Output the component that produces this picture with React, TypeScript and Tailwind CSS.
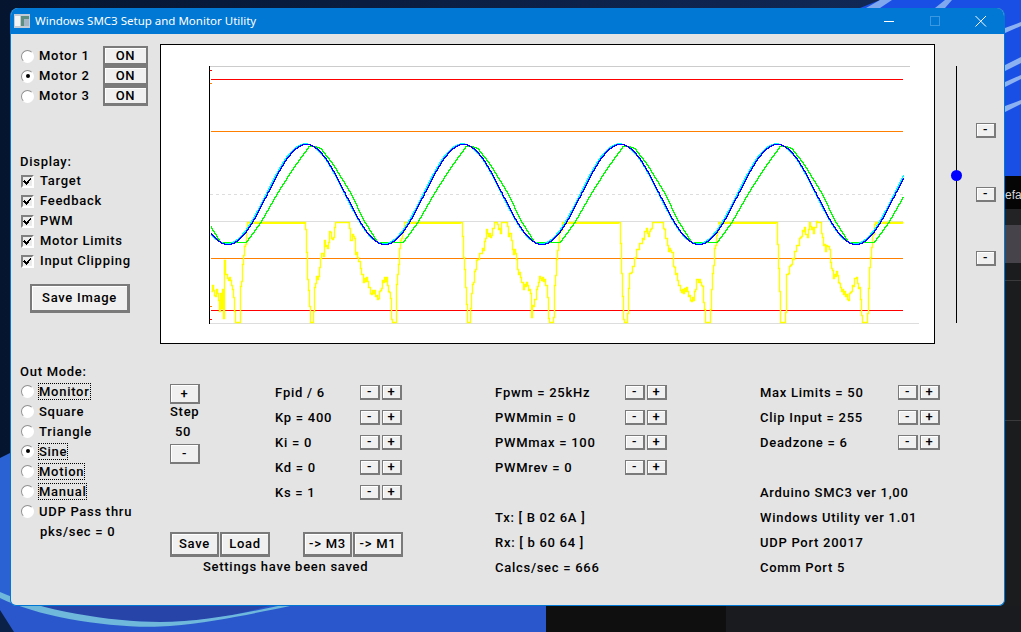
import React from "react";

const lerpPts = (pts: number[][], x: number) => {
  if (x <= pts[0][0]) return pts[0][1];
  for (let i = 1; i < pts.length; i++) {
    if (x <= pts[i][0]) {
      const [x0, y0] = pts[i - 1];
      const [x1, y1] = pts[i];
      return x1 === x0 ? y1 : y0 + ((y1 - y0) * (x - x0)) / (x1 - x0);
    }
  }
  return pts[pts.length - 1][1];
};

const stepped = (fn: (x: number) => number, x0: number, x1: number) => {
  let d = `M${x0 + 0.5} ${Math.round(fn(x0)) + 0.5}`;
  for (let x = x0 + 1; x <= x1; x++) d += `H${x + 0.5}V${Math.round(fn(x)) + 0.5}`;
  return d;
};

const blue = (x: number) => 194 - 50 * Math.cos((2 * Math.PI * (x - 305.5)) / 157);

const greenShape = [
  [-78.5, 241.7], [-60, 241.7], [-45.5, 222], [-29, 193], [-12.5, 167], [2.8, 146], [9, 146], [14.5, 148],
  [27.5, 165], [44.5, 193], [57.5, 220], [71, 241.7], [78.5, 241.7],
];
const green = (x: number) => {
  let r = ((x - 305.5 + 78.5) % 157 + 157) % 157 - 78.5;
  return lerpPts(greenShape, r);
};

const z4 = [[32,690],[38,672],[42,712],[50,692],[56,725],[58,790],[60,700],[64,750],[66,690],[70,790],[72,606],[76,650],[84,655],[92,660],[96,690],[100,705],[103,788],[117,788],[118,690],[124,650],[128,580],[135,550],[140,490],[146,486],[314,486],[316,520],[320,650],[326,700],[328,788],[338,788],[340,700],[346,660],[352,655],[358,620],[362,570],[368,590],[372,545],[380,570],[388,510],[396,540],[405,490],[415,490],[425,488],[437,490],[445,490],[450,540],[460,515],[465,580],[475,600],[480,625],[490,660],[500,660],[510,700],[520,690],[530,720],[540,690],[548,655],[558,660],[570,715],[574,788],[586,788],[588,680],[596,580],[600,540],[612,490],[620,486],[784,486],[786,530],[790,600],[796,695],[800,788],[808,788],[812,700],[820,650],[830,600],[840,580],[850,560],[858,515],[870,530],[880,490],[890,490],[900,520]];
const z11 = [[8,560],[16,520],[24,525],[32,495],[45,488],[60,488],[70,488],[80,490],[85,530],[92,515],[95,570],[105,575],[110,625],[120,650],[130,680],[140,672],[150,700],[154,788],[155,740],[165,715],[175,655],[190,655],[200,690],[205,788],[218,788],[222,680],[230,580],[235,530],[247,490],[275,486],[418,486],[420,550],[425,690],[430,788],[440,788],[445,650],[455,625],[470,570],[485,540],[495,510],[505,525],[515,490],[530,490],[548,488],[555,530],[565,570],[575,570],[580,620],[590,655],[600,690],[620,690],[630,720],[640,710],[650,655],[665,670],[675,788],[688,788],[695,640]];
const z12 = [[15,788],[28,788],[32,690],[42,570],[55,490],[60,486],[228,486],[235,640],[240,788],[254,788],[258,650],[268,620],[285,570],[295,545],[310,500],[320,540],[325,490],[340,510],[350,488],[360,490],[365,530],[375,570],[385,550],[390,605],[400,650],[410,640],[418,680],[430,695],[442,720],[455,680],[465,650],[478,690],[485,788],[500,788],[505,650],[515,530],[525,486],[608,486]];
const yellowPts = [
  ...z4.map(([x, y]) => [200 + x / 3, 60 + y / 3]),
  ...z11.map(([x, y]) => [480 + x / 3, 60 + y / 3]),
  ...z12.map(([x, y]) => [700 + x / 3, 60 + y / 3]),
].filter((p, i, a) => i === 0 || p[0] > a[i - 1][0]);
const yellow = (x: number) => lerpPts(yellowPts, x);
const jitter = (x: number) => {
  const y = yellow(x);
  if (y > 221 && y < 224) return 222;
  if (y > 320) return 322;
  return y + [0, 2, -1, 3, -2, 1, -3, 0, 2, -2][x % 10];
};

const Chart = () => (
  <div className="h-[300px] w-[775px] shrink-0 border border-black bg-white">
    <svg width="773" height="298" viewBox="161 45 773 298" className="block" shapeRendering="crispEdges" fill="none">
      <path d="M210 66.5H910" stroke="#cccccc" />
      <path d="M210 323.5H919" stroke="#dddddd" />
      <path d="M210 221.5H903" stroke="#dddddd" />
      <path d="M210 194.5H903" stroke="#dddddd" strokeDasharray="3 3" />
      <path d="M211 79.5H903" stroke="#ff0000" />
      <path d="M211 131.5H903" stroke="#ff8000" />
      <path d="M211 258.5H903" stroke="#ff8000" />
      <path d="M211 310.5H903" stroke="#ff0000" />
      <path d="M209.5 66V324" stroke="#000000" />
      <path d="M210 70.5h2M210 319.5h2" stroke="#ff0000" />
      <path d="M210 83.5h2M210 306.5h2" stroke="#ff8000" />
      <path d={stepped(jitter, 211, 903)} stroke="#ffff00" strokeWidth="1.4" shapeRendering="auto" />
      <path d="M249 222.5H305M407 222.5H461M562 222.5H619M718 222.5H776M875 222.5H903" stroke="#ffff00" strokeWidth="2" />
      <path d={stepped(green, 210, 903)} stroke="#00ff00" />
      <path d={stepped((x) => blue(x + 1) - 0.6, 210, 903)} stroke="#00ffff" />
      <path d={stepped(blue, 210, 903)} stroke="#0000ff" strokeWidth="1.5" />
    </svg>
  </div>
);

const Btn = ({ children, className }: { children?: React.ReactNode; className: string }) => (
  <div className={`flex shrink-0 items-center justify-center border border-[#7a7a7a] border-r-2 border-b-2 bg-[#f0f0f0] text-black shadow-[inset_1px_1px_0_#ffffff] ${className}`}>
    {children}
  </div>
);

const Radio = ({ checked }: { checked?: boolean }) => (
  <div className="ml-[1px] flex h-[13px] w-[13px] shrink-0 items-center justify-center rounded-full border border-[#8f8f8f] border-r-white border-b-white bg-white">
    {checked && <div className="h-[4px] w-[4px] rounded-full bg-black" />}
  </div>
);

const Check = () => (
  <div className="ml-[1px] flex h-[13px] w-[13px] shrink-0 items-center justify-center border-2 border-[#808080] border-r-white border-b-white bg-[#ececec]">
    <svg width="9" height="9" viewBox="0 0 9 9" fill="none" stroke="#000" strokeWidth="1.8" shapeRendering="crispEdges">
      <path d="M1 4l2.5 2.5L8 1.5" />
    </svg>
  </div>
);

const MotorRow = ({ label, checked }: { label: string; checked?: boolean }) => (
  <div className="flex h-5 items-center">
    <Radio checked={checked} />
    <span className="ml-[5px] w-[64px]">{label}</span>
    <Btn className="h-5 w-[45px] border-2 border-b-[3px]">ON</Btn>
  </div>
);

const CheckRow = ({ label }: { label: string }) => (
  <div className="flex h-5 items-center">
    <Check />
    <span className="ml-[6px]">{label}</span>
  </div>
);

const ModeRow = ({ label, checked, focus }: { label: string; checked?: boolean; focus?: boolean }) => (
  <div className="flex h-5 items-center">
    <Radio checked={checked} />
    <span className={`ml-[4px] border border-dotted px-0 leading-[15px] ${focus ? "border-black" : "border-transparent"}`}>{label}</span>
  </div>
);

const ParamRow = ({ label, w }: { label: string; w: string }) => (
  <div className="flex h-[25px] items-center">
    <span className={`shrink-0 ${w}`}>{label}</span>
    <Btn className="h-[15px] w-5">-</Btn>
    <Btn className="ml-[2px] h-[15px] w-5">+</Btn>
  </div>
);

const TextRow = ({ label }: { label: string }) => <div className="flex h-[25px] items-center">{label}</div>;

const Wallpaper = () => (
  <svg className="absolute inset-0" width="1021" height="632" viewBox="0 0 1021 632">
    <defs>
      <linearGradient id="navy" x1="0" x2="1" y1="0" y2="0">
        <stop offset="0" stopColor="#051530" />
        <stop offset="1" stopColor="#132b5c" />
      </linearGradient>
    </defs>
    <rect width="1021" height="632" fill="url(#navy)" />
    <path d="M0 458L12 452V632H0Z" fill="#2a62d4" />
    <rect x="0" y="600" width="546" height="32" fill="#2a58cc" />
    <path d="M10 600H290C250 612 210 622 160 622C110 622 50 612 10 600Z" fill="#2745a8" />
    <path d="M0 598C40 618 120 630 170 626C215 622 260 612 290 606H278C240 614 200 622 160 622C110 622 40 610 0 592Z" fill="#6fb8dc" />
    <path d="M0 610L14 632H0Z" fill="#0b2148" />
    <path d="M860 8L880 0H1021V176H1000V8Z" fill="#1a4fe6" />
    <path d="M866 8L880 0H892L880 8ZM935 8L945 0H952L945 8Z" fill="#7fa8ee" />
    <path d="M1005 28L1021 22V26L1005 33ZM1005 65L1021 57V63L1005 71ZM1005 82L1021 75V79L1005 87ZM1005 106L1021 100V104L1005 112Z" fill="#8db2f2" />
    <rect x="546" y="606" width="180" height="26" fill="#0f0f10" />
    <rect x="726" y="606" width="295" height="26" fill="#1a1b1e" />
    <rect x="1000" y="176" width="21" height="33" fill="#050505" />
    <rect x="1000" y="209" width="21" height="16" fill="#232325" />
    <rect x="1000" y="225" width="21" height="38" fill="#46444a" />
    <rect x="1000" y="263" width="21" height="343" fill="#1b1c1e" />
    <rect x="1000" y="280" width="21" height="1" fill="#3a3a3c" />
    <rect x="1000" y="420" width="21" height="1" fill="#3a3a3c" />
  </svg>
);

const AppIcon = () => (
  <svg width="16" height="14" viewBox="0 0 16 14" shapeRendering="crispEdges">
    <rect width="16" height="14" fill="#c3ccd6" />
    <rect x="1" y="2" width="5" height="10" fill="#f2f4f6" />
    <rect x="7" y="2" width="8" height="10" fill="#5c8f80" />
    <rect x="10" y="5" width="5" height="7" fill="#a3b5c5" />
  </svg>
);

export default function App() {
  return (
    <div className="relative h-[632px] w-[1021px] overflow-hidden font-['Roboto',Arial,sans-serif] text-[13px] font-medium tracking-[0.72px] text-black">
      <Wallpaper />
      <span className="absolute left-[1005px] top-[186px] font-['Liberation_Sans',sans-serif] text-[12px] font-normal tracking-normal text-[#d8d8d8]">efa</span>
      <div className="absolute left-[10px] top-[8px] flex h-[598px] w-[995px] flex-col overflow-hidden rounded-t-lg rounded-b-[6px] border-x border-b border-[#0078d4] bg-[#e4e4e4]">
        <div className="-mx-px flex h-[26px] shrink-0 items-center bg-[#0078d4] text-white">
          <div className="ml-[4px] flex w-[21px] justify-start"><AppIcon /></div>
          <span className="font-['Noto_Sans',sans-serif] text-[11.5px] font-normal tracking-normal">Windows SMC3 Setup and Monitor Utility</span>
          <div className="ml-auto flex items-center">
            <svg width="130" height="26" viewBox="0 0 130 26" fill="none">
              <path d="M9 13.5H19" stroke="#fff" />
              <rect x="55.5" y="8.5" width="9" height="9" stroke="#3a97e2" />
              <path d="M100.5 8L111 18.5M111 8L100.5 18.5" stroke="#fff" />
            </svg>
          </div>
        </div>

        <div className="flex flex-1 flex-col">
          <div className="flex pt-[10px]">
            <div className="w-[149px] shrink-0 pl-[9px] pt-[2px]">
              <MotorRow label="Motor 1" />
              <MotorRow label="Motor 2" checked />
              <MotorRow label="Motor 3" />
              <div className="mt-[46px] flex h-[19px] items-center">Display:</div>
              <CheckRow label="Target" />
              <CheckRow label="Feedback" />
              <CheckRow label="PWM" />
              <CheckRow label="Motor Limits" />
              <CheckRow label="Input Clipping" />
              <Btn className="ml-[10px] mt-[13px] h-[29px] w-[100px] border-2 border-b-[3px] border-r-[3px]">Save Image</Btn>
            </div>
            <Chart />
            <div className="relative ml-[21px] mt-[22px] h-[257px] w-px bg-black">
              <div className="absolute left-[-5px] top-[104px] h-[11px] w-[11px] rounded-full bg-[#0000ff]" />
            </div>
            <div className="ml-[19px] flex flex-col gap-[49px] pt-[79px]">
              <Btn className="h-[15px] w-5">-</Btn>
              <Btn className="h-[15px] w-5">-</Btn>
              <Btn className="h-[15px] w-5">-</Btn>
            </div>
          </div>

          <div className="mt-[18px] flex">
            <div className="w-[159px] shrink-0 pl-[9px]">
              <div className="flex h-[19px] items-center">Out Mode:</div>
              <ModeRow label="Monitor" focus />
              <ModeRow label="Square" />
              <ModeRow label="Triangle" />
              <ModeRow label="Sine" checked focus />
              <ModeRow label="Motion" focus />
              <ModeRow label="Manual" focus />
              <ModeRow label="UDP Pass thru" />
              <div className="mt-[1px] flex h-5 items-center pl-[20px]">pks/sec = 0</div>
            </div>

            <div className="w-[325px] shrink-0">
              <div className="flex">
                <div className="w-[105px] shrink-0 pt-[22px]">
                  <Btn className="h-5 w-[30px]">+</Btn>
                  <div className="flex h-4 items-center">Step</div>
                  <div className="flex h-6 items-center pl-[5px]">50</div>
                  <Btn className="h-5 w-[30px]">-</Btn>
                </div>
                <div className="pt-[18px]">
                  <ParamRow label="Fpid / 6" w="w-[85px]" />
                  <ParamRow label="Kp = 400" w="w-[85px]" />
                  <ParamRow label="Ki = 0" w="w-[85px]" />
                  <ParamRow label="Kd = 0" w="w-[85px]" />
                  <ParamRow label="Ks = 1" w="w-[85px]" />
                </div>
              </div>
              <div className="mt-[27px] flex h-[25px]">
                <Btn className="h-[25px] w-[49px] border-2 border-b-[3px]">Save</Btn>
                <Btn className="ml-[1px] h-[25px] w-[50px] border-2 border-b-[3px]">Load</Btn>
                <Btn className="ml-[33px] h-[25px] w-[49px] border-2 border-b-[3px]">-&gt; M3</Btn>
                <Btn className="ml-[1px] h-[25px] w-[50px] border-2 border-b-[3px]">-&gt; M1</Btn>
              </div>
              <div className="flex h-5 items-center pl-[33px]">Settings have been saved</div>
            </div>

            <div className="w-[265px] shrink-0 pt-[18px]">
              <ParamRow label="Fpwm = 25kHz" w="w-[130px]" />
              <ParamRow label="PWMmin = 0" w="w-[130px]" />
              <ParamRow label="PWMmax = 100" w="w-[130px]" />
              <ParamRow label="PWMrev = 0" w="w-[130px]" />
              <div className="h-[25px]" />
              <TextRow label="Tx: [ B 02 6A ]" />
              <TextRow label="Rx: [ b 60 64 ]" />
              <TextRow label="Calcs/sec = 666" />
            </div>

            <div className="pt-[18px]">
              <ParamRow label="Max Limits = 50" w="w-[138px]" />
              <ParamRow label="Clip Input = 255" w="w-[138px]" />
              <ParamRow label="Deadzone = 6" w="w-[138px]" />
              <div className="h-[25px]" />
              <TextRow label="Arduino SMC3 ver 1,00" />
              <TextRow label="Windows Utility ver 1.01" />
              <TextRow label="UDP Port 20017" />
              <TextRow label="Comm Port 5" />
            </div>
          </div>
        </div>
      </div>
    </div>
  );
}
